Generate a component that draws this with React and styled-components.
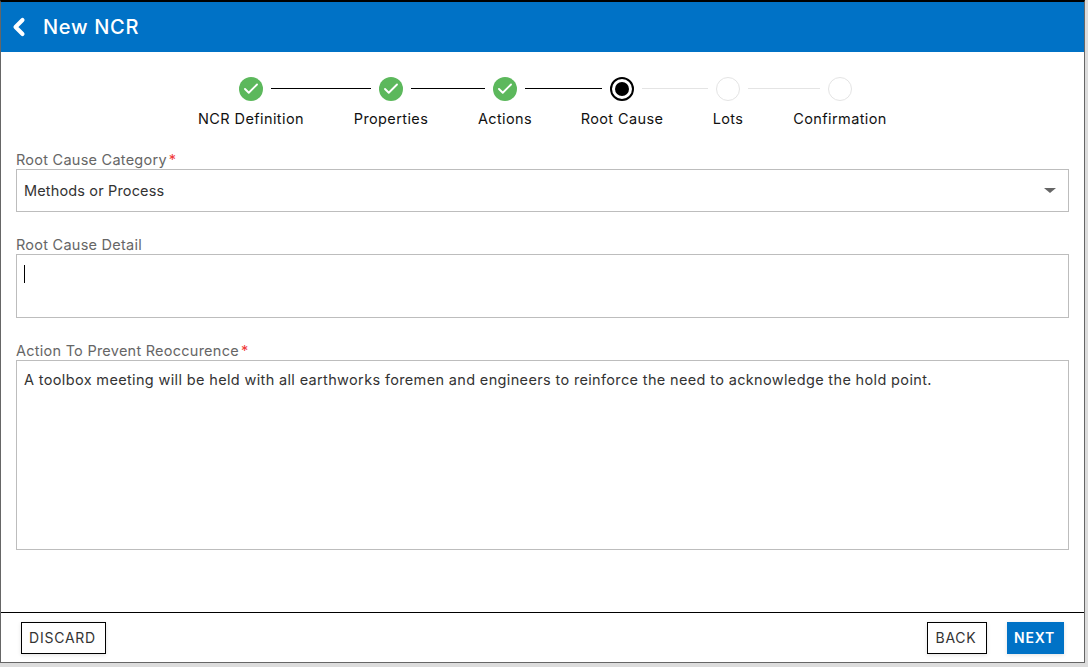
import React from 'react';
import styled, { createGlobalStyle } from 'styled-components';
import { Check, ChevronLeft } from 'lucide-react';

const GlobalStyle = createGlobalStyle`
  html, body { margin: 0; padding: 0; height: 100%; background: #dcdcdc; }
  body { font-family: Inter, "Open Sans", "Liberation Sans", sans-serif; }
`;

const Modal = styled.div`
  width: 1085px;
  height: 663px;
  box-sizing: border-box;
  background: #fff;
  border-top: 2px solid #000;
  border-left: 1px solid #666;
  border-right: 1px solid #666;
  border-bottom: 1px solid #666;
  display: flex;
  flex-direction: column;
`;

const Header = styled.header`
  height: 50px;
  flex: none;
  background: #0072c6;
  color: #fff;
  display: flex;
  align-items: center;
  padding-left: 4px;
  gap: 10px;
`;

const Title = styled.h1`
  margin: 0;
  font-size: 20px;
  font-weight: 500;
  letter-spacing: 0.7px;
`;

const Stepper = styled.div`
  display: flex;
  justify-content: center;
  padding: 25px 0 0 5px;
  height: 99px;
  box-sizing: border-box;
  flex: none;
`;

const Step = styled.div`
  width: 24px;
  display: flex;
  flex-direction: column;
  align-items: center;
  gap: 9px;
  flex: none;
`;

const StepLabel = styled.span`
  font-size: 14.5px;
  line-height: 17px;
  padding-left: 1px;
  color: #111;
  letter-spacing: 0.4px;
  white-space: nowrap;
`;

const Circle = styled.div`
  width: 24px;
  height: 24px;
  flex: none;
  box-sizing: border-box;
  border-radius: 50%;
  display: flex;
  align-items: center;
  justify-content: center;
  background: ${(p) => (p.$state === 'done' ? '#5cb85c' : '#fff')};
  border: ${(p) =>
    p.$state === 'current' ? '2px solid #000' : p.$state === 'todo' ? '1px solid #e4e4e4' : 'none'};
`;

const Dot = styled.div`
  width: 14px;
  height: 14px;
  border-radius: 50%;
  background: #000;
`;

const Connector = styled.div`
  width: ${(p) => p.$width}px;
  height: 1px;
  margin: 11px 8px 0;
  flex: none;
  background: ${(p) => (p.$done ? '#000' : '#e4e4e4')};
`;

const Form = styled.div`
  flex: 1;
  padding: 0 15px;
  display: flex;
  flex-direction: column;
`;

const Field = styled.div`
  margin-bottom: ${(p) => p.$gap}px;
`;

const Label = styled.label`
  display: block;
  font-size: 14.5px;
  line-height: 17px;
  padding-bottom: 1px;
  color: #666;
  letter-spacing: 0.25px;
`;

const Required = styled.span`
  color: #f03a3a;
  margin-left: 2px;
`;

const Box = styled.div`
  box-sizing: border-box;
  height: ${(p) => p.$height}px;
  border: 1px solid #bdbdbd;
  padding: ${(p) => p.$padding};
  font-size: 14.5px;
  line-height: 17px;
  letter-spacing: ${(p) => (p.$select ? '0.15px' : '0.35px')};
  color: #333;
  display: flex;
  align-items: ${(p) => (p.$select ? 'center' : 'flex-start')};
  justify-content: space-between;
`;

const Caret = styled.div`
  width: 0;
  height: 0;
  margin-right: 5px;
  border-left: 6px solid transparent;
  border-right: 6px solid transparent;
  border-top: 5px solid #666;
`;

const Cursor = styled.div`
  width: 1px;
  height: 18px;
  background: #000;
`;

const Footer = styled.footer`
  height: 50px;
  flex: none;
  box-sizing: border-box;
  border-top: 1px solid #000;
  padding: 9px 20px 0;
  display: flex;
  gap: 20px;
`;

const Button = styled.button`
  width: ${(p) => p.$width}px;
  height: 32px;
  box-sizing: border-box;
  font-family: inherit;
  font-size: 14px;
  padding: 0 2px 1px 0;
  letter-spacing: 0.75px;
  cursor: pointer;
  box-shadow: 0 1px 4px rgba(0, 0, 0, 0.12);
  background: ${(p) => (p.$primary ? '#0072c6' : '#fff')};
  color: ${(p) => (p.$primary ? '#fff' : '#333')};
  font-weight: ${(p) => (p.$primary ? 600 : 400)};
  border: ${(p) => (p.$primary ? 'none' : '1px solid #000')};
`;

const Spacer = styled.div`
  flex: 1;
`;

const steps = [
  { label: 'NCR Definition', state: 'done', line: 100 },
  { label: 'Properties', state: 'done', line: 74 },
  { label: 'Actions', state: 'done', line: 77 },
  { label: 'Root Cause', state: 'current', line: 66 },
  { label: 'Lots', state: 'todo', line: 72 },
  { label: 'Confirmation', state: 'todo' },
];

export default function App() {
  return (
    <>
      <GlobalStyle />
      <Modal>
        <Header>
          <ChevronLeft size={28} strokeWidth={3.5} />
          <Title>New NCR</Title>
        </Header>
        <Stepper>
          {steps.map((s) => (
            <React.Fragment key={s.label}>
              <Step>
                <Circle $state={s.state}>
                  {s.state === 'done' && <Check size={18} color="#fff" strokeWidth={2.5} />}
                  {s.state === 'current' && <Dot />}
                </Circle>
                <StepLabel>{s.label}</StepLabel>
              </Step>
              {s.line && <Connector $width={s.line} $done={s.state === 'done'} />}
            </React.Fragment>
          ))}
        </Stepper>
        <Form>
          <Field $gap={24}>
            <Label>Root Cause Category<Required>*</Required></Label>
            <Box $height={43} $padding="0 7px" $select>
              Methods or Process
              <Caret />
            </Box>
          </Field>
          <Field $gap={24}>
            <Label>Root Cause Detail</Label>
            <Box $height={64} $padding="10px 7px">
              <Cursor />
            </Box>
          </Field>
          <Field $gap={0}>
            <Label>Action To Prevent Reoccurence<Required>*</Required></Label>
            <Box $height={190} $padding="10px 7px">
              A toolbox meeting will be held with all earthworks foremen and engineers to reinforce the need to acknowledge the hold point.
            </Box>
          </Field>
        </Form>
        <Footer>
          <Button $width={85}>DISCARD</Button>
          <Spacer />
          <Button $width={60}>BACK</Button>
          <Button $width={57} $primary>NEXT</Button>
        </Footer>
      </Modal>
    </>
  );
}
